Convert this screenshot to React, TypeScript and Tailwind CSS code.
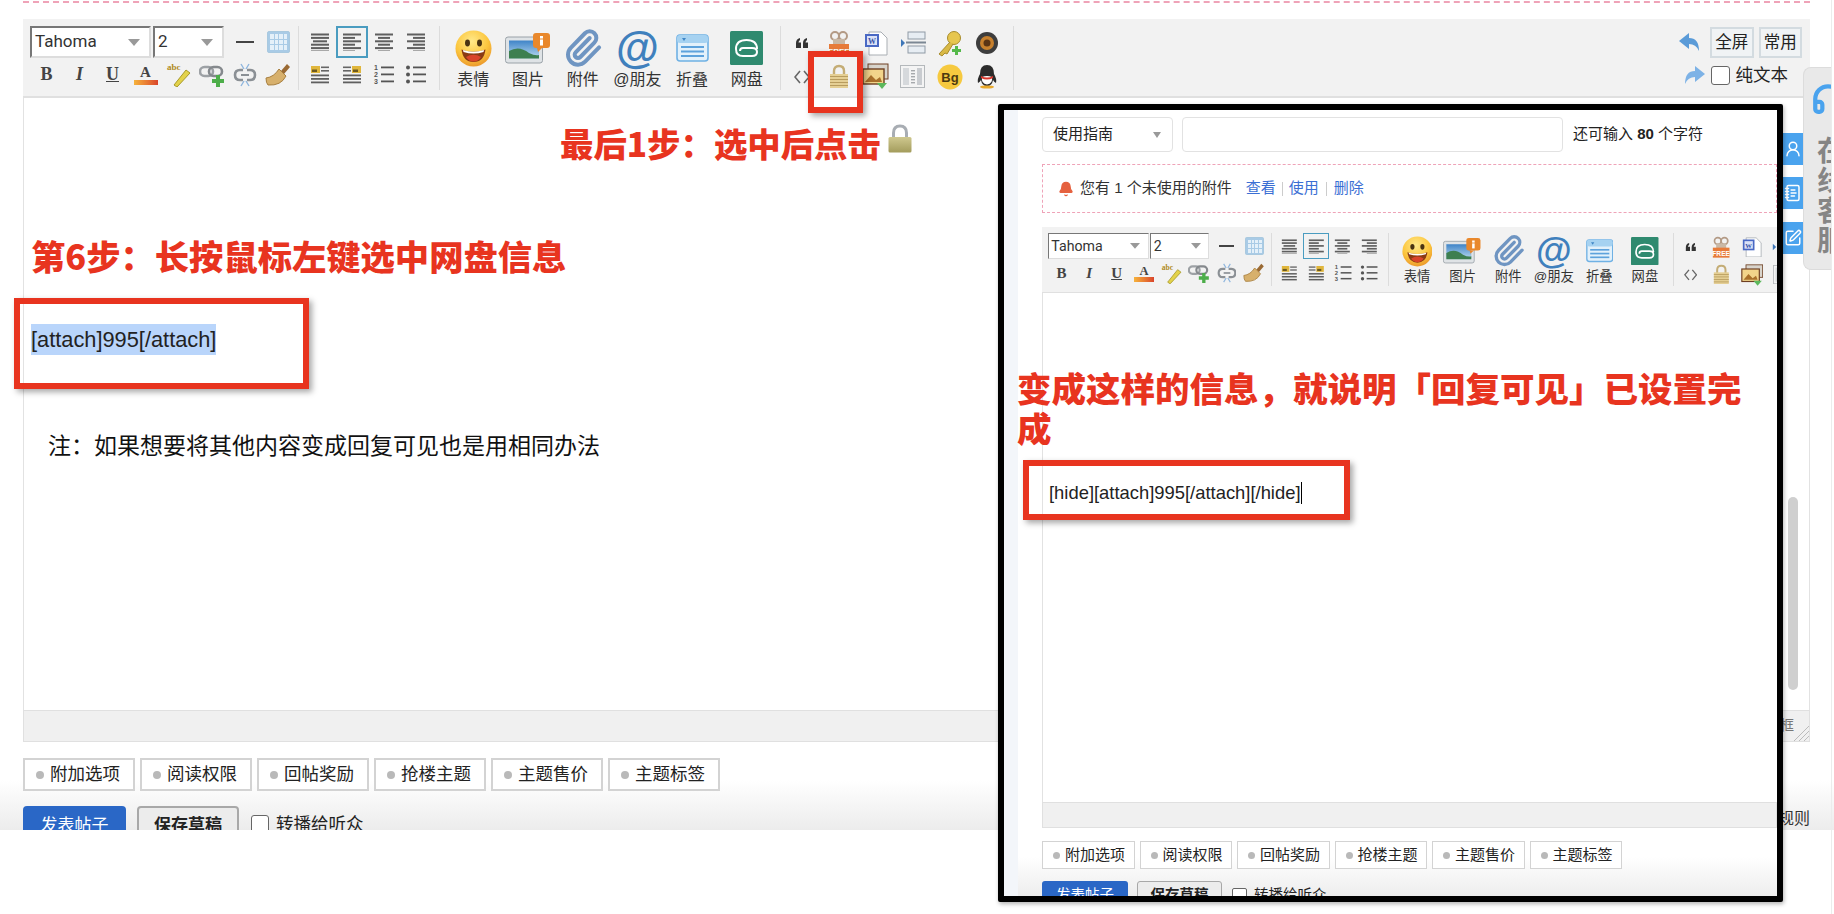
import { Bell, Headphones, Paperclip, SquarePen, UserRound, NotebookText } from "lucide-react"

const SANS = "font-['Liberation_Sans','Noto_Sans_CJK_SC',sans-serif]"
const ANNOTATION = "absolute font-['Noto_Sans_CJK_SC',sans-serif] font-black text-[#e8341f] leading-[40px]"
const RED_BOX = "absolute border-[6px] border-[#e8341f] shadow-[3px_3px_6px_rgba(0,0,0,0.35)]"

type Row = [number, number]

function Lines({ rows }: { rows: Row[] }) {
  return (
    <svg width="20" height="18" viewBox="0 0 20 18">
      {rows.map((r, i) => (
        <rect key={i} x={r[0]} y={i * 3.4 + 0.5} width={r[1]} height="2" fill="#5f5f5f" />
      ))}
    </svg>
  )
}

function FloatImg({ right }: { right?: boolean }) {
  return (
    <svg width="20" height="18" viewBox="0 0 20 18">
      <rect x={right ? 10 : 1} y="0" width="9" height="7" fill="#e0b63c" />
      <rect x={right ? 11 : 2} y="3.5" width="5" height="2.5" fill="#6d5a20" />
      <rect x={right ? 1 : 11} y="0.5" width="8" height="1.6" fill="#666" />
      <rect x={right ? 1 : 11} y="4" width="8" height="1.6" fill="#666" />
      <rect x="1" y="8.5" width="18" height="1.8" fill="#5f5f5f" />
      <rect x="1" y="12" width="18" height="1.8" fill="#5f5f5f" />
      <rect x="1" y="15.5" width="18" height="1.8" fill="#5f5f5f" />
    </svg>
  )
}

function ListIcon({ ordered }: { ordered?: boolean }) {
  return (
    <svg width="22" height="20" viewBox="0 0 22 20">
      {[2, 9, 16].map((y, i) =>
        ordered ? (
          <text key={y} x="1" y={y + 3} fontSize="7" fontWeight="700" fill="#555" fontFamily="Liberation Sans">
            {i + 1}
          </text>
        ) : (
          <circle key={y} cx="3" cy={y + 0.5} r="2" fill="#555" />
        ),
      )}
      {[2, 9, 16].map((y) => (
        <rect key={y} x="8" y={y - 0.5} width="13" height="1.8" fill="#555" />
      ))}
    </svg>
  )
}

function Smile() {
  return (
    <svg width="37" height="37" viewBox="0 0 37 37">
      <defs>
        <radialGradient id="sm" cx="45%" cy="30%" r="75%">
          <stop offset="0%" stopColor="#ffe98a" />
          <stop offset="60%" stopColor="#fcc63d" />
          <stop offset="100%" stopColor="#e8912a" />
        </radialGradient>
      </defs>
      <circle cx="18.5" cy="18.5" r="18" fill="url(#sm)" />
      <ellipse cx="12.5" cy="13" rx="2.5" ry="3.4" fill="#4a3312" />
      <ellipse cx="24.5" cy="13" rx="2.5" ry="3.4" fill="#4a3312" />
      <path d="M6.5 19.5 Q18.5 24 30.5 19.5 Q29 32 18.5 32 Q8 32 6.5 19.5Z" fill="#8a3a14" />
      <path d="M11 27 Q18.5 22.5 26 27 Q23 31.5 18.5 31.5 Q14 31.5 11 27Z" fill="#d9442a" />
      <path d="M8 20 Q18.5 23.5 29 20 L28.5 22 Q18.5 25 8.5 22Z" fill="#fff" />
    </svg>
  )
}

function PictureIcon() {
  return (
    <svg width="46" height="31" viewBox="0 0 46 31">
      <defs>
        <linearGradient id="sky" x1="0" y1="0" x2="0" y2="1">
          <stop offset="0%" stopColor="#3f84c8" />
          <stop offset="100%" stopColor="#bcdcf0" />
        </linearGradient>
      </defs>
      <rect x="0.5" y="4" width="37" height="26" rx="2.5" fill="#dfe3e6" stroke="#9aa2a8" />
      <rect x="4" y="7.5" width="30" height="18" fill="url(#sky)" />
      <path d="M4 18 Q14 12 24 20 Q30 23 34 22 V25.5 H4Z" fill="#3d7f50" />
      <rect x="28" y="0" width="17" height="15" rx="3" fill="#e9882c" />
      <path d="M32 15 L33 19 L37 15Z" fill="#e9882c" />
      <rect x="35" y="3" width="3" height="2.5" fill="#fff" />
      <rect x="35" y="6.5" width="3" height="6" fill="#fff" />
    </svg>
  )
}

function FoldIcon() {
  return (
    <svg width="33" height="28" viewBox="0 0 33 28">
      <rect x="1" y="1" width="31" height="26" rx="3" fill="#e3f1fb" stroke="#6fb1e4" strokeWidth="1.6" />
      <rect x="1" y="1" width="31" height="8" rx="3" fill="#a6d2f1" />
      <path d="M6 4 L10 4 L8 7Z" fill="#3f86c6" />
      <rect x="5" y="12" width="23" height="2" fill="#5da2dc" />
      <rect x="5" y="16.5" width="23" height="2" fill="#5da2dc" />
      <rect x="5" y="21" width="23" height="2" fill="#5da2dc" />
    </svg>
  )
}

function PanIcon() {
  return (
    <svg width="33" height="34" viewBox="0 0 33 34">
      <rect width="33" height="34" rx="1.5" fill="#2f8a6f" />
      <path
        d="M6 18 Q6 9 16.5 9 Q27 9 27 18 M6 18 Q6 25 13 25 H22 Q27 25 27 21 Q27 17 22 17 H13 Q10 17 10 20"
        fill="none"
        stroke="#fff"
        strokeWidth="2"
      />
    </svg>
  )
}

function LockTan() {
  return (
    <svg width="20" height="25" viewBox="0 0 20 25">
      <path d="M5 11 V7 Q5 2 10 2 Q15 2 15 7 V11" fill="none" stroke="#c4ad76" strokeWidth="2.4" />
      <rect x="1" y="10" width="18" height="14" fill="#e5cf94" />
      {[12, 15, 18, 21].map((y) => (
        <rect key={y} x="1" y={y} width="18" height="1" fill="#b89c5e" />
      ))}
    </svg>
  )
}

function LockEmoji() {
  return (
    <svg width="24" height="29" viewBox="0 0 24 29">
      <defs>
        <linearGradient id="kh" x1="0" y1="0" x2="0" y2="1">
          <stop offset="0%" stopColor="#cfc88f" />
          <stop offset="100%" stopColor="#a39c5c" />
        </linearGradient>
      </defs>
      <path d="M5.5 14 V9 Q5.5 2 12 2 Q18.5 2 18.5 9 V14" fill="none" stroke="#a8adb3" strokeWidth="3" />
      <rect x="0.5" y="13" width="23" height="15.5" rx="1.5" fill="url(#kh)" />
    </svg>
  )
}

function SmallIcons({ name }: { name: string }) {
  switch (name) {
    case "quote":
      return (
        <svg width="14" height="10" viewBox="0 0 14 10">
          <path d="M1 10 V5 Q1 1 5 0 V2 Q3.5 3 3.5 4.5 H6 V10Z M8 10 V5 Q8 1 12 0 V2 Q10.5 3 10.5 4.5 H13 V10Z" fill="#333" />
        </svg>
      )
    case "free":
      return (
        <svg width="22" height="27" viewBox="0 0 22 27">
          <circle cx="7" cy="6" r="4" fill="none" stroke="#b39a85" strokeWidth="2" />
          <circle cx="15" cy="6" r="4" fill="none" stroke="#b39a85" strokeWidth="2" />
          <rect x="5" y="9" width="12" height="6" fill="#c9b8a6" />
          <rect x="1" y="14" width="20" height="12" fill="#e77b3a" />
          <text x="11" y="24" fontSize="8" fontWeight="700" textAnchor="middle" fill="#fff" fontFamily="Liberation Sans">FREE</text>
        </svg>
      )
    case "doc":
      return (
        <svg width="24" height="25" viewBox="0 0 24 25">
          <path d="M5 1 H17 L23 7 V24 H5Z" fill="#fff" stroke="#a9aeb3" />
          <rect x="1" y="3" width="14" height="13" fill="#4a69c4" />
          <rect x="3" y="5" width="10" height="9" fill="#dbe2f7" />
          <text x="8" y="13" fontSize="8" fontWeight="700" textAnchor="middle" fill="#3a55a8" fontFamily="Liberation Serif">W</text>
        </svg>
      )
    case "pagebreak":
      return (
        <svg width="26" height="24" viewBox="0 0 26 24">
          <path d="M1 8 L5 12 L1 16Z" fill="#3f77b8" />
          <rect x="8" y="1" width="17" height="7" fill="#e7edf3" stroke="#8f9aa5" />
          <rect x="6" y="10.5" width="20" height="2" fill="#7b8794" />
          <rect x="8" y="15" width="17" height="7" fill="#e7edf3" stroke="#8f9aa5" />
        </svg>
      )
    case "key":
      return (
        <svg width="26" height="27" viewBox="0 0 26 27">
          <circle cx="17" cy="8" r="6.5" fill="#e6c64f" stroke="#a88c2c" />
          <path d="M13 12 L2 24 L5 26 L8 23 L10 24 L16 14" fill="#d9b946" stroke="#a88c2c" />
          <path d="M18 16 h3 v3 h3 v3 h-3 v3 h-3 v-3 h-3 v-3 h3z" fill="#55b94a" />
        </svg>
      )
    case "disc":
      return (
        <svg width="24" height="24" viewBox="0 0 24 24">
          <circle cx="12" cy="12" r="11" fill="#3d3d3d" />
          <circle cx="12" cy="12" r="7" fill="#c7802d" />
          <circle cx="12" cy="12" r="3.5" fill="#5a3414" />
        </svg>
      )
    case "code":
      return (
        <svg width="16" height="14" viewBox="0 0 16 14">
          <path d="M6 1 L1 7 L6 13 M10 1 L15 7 L10 13" fill="none" stroke="#666" strokeWidth="1.6" />
        </svg>
      )
    case "imgdown":
      return (
        <svg width="27" height="27" viewBox="0 0 27 27">
          <rect x="6" y="1" width="20" height="15" fill="#d8d4cc" stroke="#6e3f22" />
          <rect x="1" y="6" width="21" height="15" fill="#f2d48a" stroke="#6e3f22" strokeWidth="1.4" />
          <path d="M3 19 L9 12 L14 17 L18 14 L20 19Z" fill="#a9702a" />
          <path d="M15 20 H25 L20 26Z" fill="#5cb85c" />
        </svg>
      )
    case "columns":
      return (
        <svg width="25" height="23" viewBox="0 0 25 23">
          <rect x="0.5" y="0.5" width="24" height="22" fill="#f4f4f4" stroke="#b4b8bb" />
          <rect x="3" y="3" width="6" height="17" fill="#d6d9dc" />
          {[5, 8, 11, 14, 17].map((y) => (
            <rect key={y} x="11" y={y} width="4" height="1.4" fill="#a6a9ac" />
          ))}
          <rect x="17" y="3" width="5" height="17" fill="#c9ccd0" />
        </svg>
      )
    case "bg":
      return (
        <svg width="26" height="26" viewBox="0 0 26 26">
          <circle cx="13" cy="13" r="12.5" fill="#f6c93f" />
          <text x="13" y="18" fontSize="13" fontWeight="700" textAnchor="middle" fill="#4c3a10" fontFamily="Liberation Sans">Bg</text>
        </svg>
      )
    case "qq":
      return (
        <svg width="22" height="25" viewBox="0 0 22 25">
          <path d="M11 1 Q18 1 18 10 Q21 15 20 19 Q18 18 17 16 Q16 22 11 22 Q6 22 5 16 Q4 18 2 19 Q1 15 4 10 Q4 1 11 1Z" fill="#2b2b2b" />
          <path d="M6 13 Q11 11 16 13 Q17 20 11 20.5 Q5 20 6 13Z" fill="#fff" />
          <path d="M5 12 Q11 15 17 12 L17 14 Q11 17 5 14Z" fill="#d9352b" />
          <ellipse cx="11" cy="23" rx="7" ry="1.6" fill="#e8a92c" />
        </svg>
      )
    default:
      return <LockTan />
  }
}

function Arrow() {
  return (
    <svg width="12" height="7" viewBox="0 0 12 7">
      <path d="M0 0 H12 L6 7Z" fill="#999" />
    </svg>
  )
}

function FontSelect({ label, width }: { label: string; width: string }) {
  return (
    <div className={`flex h-[32px] items-center justify-between border-2 border-b-[#ddd] border-l-[#777] border-r-[#ddd] border-t-[#777] bg-white pl-[3px] pr-[9px] font-['Roboto',sans-serif] text-[17px] text-[#333] ${width}`}>
      <span>{label}</span>
      <Arrow />
    </div>
  )
}

function Toolbar({ className }: { className?: string }) {
  const alignRows: Row[][] = [
    [[1, 18], [1, 18], [3, 14], [1, 18], [1, 18], [1, 18]],
    [[1, 18], [1, 12], [1, 18], [1, 12], [1, 18], [1, 12]],
    [[1, 18], [4, 12], [1, 18], [4, 12], [1, 18], [4, 12]],
    [[1, 18], [7, 12], [1, 18], [7, 12], [1, 18], [7, 12]],
  ]
  return (
    <div className={`flex h-[79px] w-[1787px] shrink-0 items-start border-b-2 border-[#e0e0e0] bg-[#f2f2f2] pl-[7px] pt-[7px] ${className ?? ""}`}>
      <div className="w-[264px] shrink-0">
        <div className="flex h-[32px] items-center gap-[2px]">
          <FontSelect label="Tahoma" width="w-[121px]" />
          <FontSelect label="2" width="w-[71px]" />
          <div className="ml-[10px] h-[2.5px] w-[18px] bg-[#444]" />
          <div className="ml-[11px] grid h-[22px] w-[23px] grid-cols-4 gap-px rounded-[2px] border border-[#a9c9df] bg-[#a9cbe6] p-[2px]">
            {Array.from({ length: 12 }).map((_, i) => (
              <span key={i} className="bg-[#e4f0f9]" />
            ))}
          </div>
        </div>
        <div className="grid h-[33px] grid-cols-8">
          <span className="flex items-center justify-center font-['Liberation_Serif',serif] text-[18px] font-bold text-[#444]">B</span>
          <span className="flex items-center justify-center font-['Liberation_Serif',serif] text-[18px] font-bold italic text-[#444]">I</span>
          <span className="flex items-center justify-center font-['Liberation_Serif',serif] text-[18px] font-bold text-[#444] underline">U</span>
          <span className="flex flex-col items-center justify-center">
            <span className="font-['Liberation_Serif',serif] text-[15px] font-bold leading-[15px] text-[#444]">A</span>
            <span className="h-[5px] w-[24px] bg-gradient-to-r from-[#f5b23c] to-[#d9432b]" />
          </span>
          <span className="flex items-center justify-center">
            <svg width="25" height="25" viewBox="0 0 25 25">
              <text x="1" y="8" fontSize="9" fontWeight="700" fill="#b08a1c" fontFamily="Liberation Serif">abc</text>
              <path d="M8 23 L20 8 L24 11 L11 25Z" fill="#e3d24a" stroke="#a89a2a" />
            </svg>
          </span>
          <span className="flex items-center justify-center">
            <svg width="26" height="24" viewBox="0 0 26 24">
              <rect x="1" y="4" width="13" height="9" rx="4.5" fill="none" stroke="#9da1a5" strokeWidth="2.6" />
              <rect x="10" y="4" width="13" height="9" rx="4.5" fill="none" stroke="#85898d" strokeWidth="2.6" />
              <path d="M17 12 h4 v4 h4 v4 h-4 v4 h-4 v-4 h-4 v-4 h4z" fill="#4dae4a" />
            </svg>
          </span>
          <span className="flex items-center justify-center">
            <svg width="24" height="24" viewBox="0 0 24 24">
              <path d="M10 7 H7 Q2 7 2 12 Q2 17 7 17 H10 M14 7 H17 Q22 7 22 12 Q22 17 17 17 H14" fill="none" stroke="#8b9095" strokeWidth="2.6" />
              <path d="M8 12 H16" stroke="#8b9095" strokeWidth="2" />
              <path d="M8 1 L11 6 M16 1 L13 6 M8 23 L11 18 M16 23 L13 18" stroke="#8fb6de" strokeWidth="1.4" />
            </svg>
          </span>
          <span className="flex items-center justify-center">
            <svg width="26" height="24" viewBox="0 0 26 24">
              <path d="M16 8 L22 1 L25 4 L19 11Z" fill="#9a6a34" />
              <path d="M14 6 L21 13 Q16 23 3 22 Q1 20 1 15 Q9 14 14 6Z" fill="#d7b06c" stroke="#a87f3f" />
            </svg>
          </span>
        </div>
      </div>
      <div className="ml-[4px] h-[64px] w-px shrink-0 bg-[#dcdcdc]" />
      <div className="ml-[5px] grid w-[128px] shrink-0 grid-cols-4 grid-rows-[32px_33px]">
        {alignRows.map((rows, i) => (
          <div key={i} className={`flex items-center justify-center ${i === 1 ? "border-2 border-[#4a9cc0]" : ""}`}>
            <Lines rows={rows} />
          </div>
        ))}
        <div className="flex items-center justify-center"><FloatImg /></div>
        <div className="flex items-center justify-center"><FloatImg right /></div>
        <div className="flex items-center justify-center"><ListIcon ordered /></div>
        <div className="flex items-center justify-center"><ListIcon /></div>
      </div>
      <div className="ml-[7px] h-[64px] w-px shrink-0 bg-[#dcdcdc]" />
      <div className="ml-[6px] flex shrink-0">
        {[
          { label: "表情", icon: <Smile /> },
          { label: "图片", icon: <PictureIcon /> },
          { label: "附件", icon: <Paperclip size={40} strokeWidth={2.4} className="text-[#6f95c2]" /> },
          { label: "@朋友", icon: <span className="font-['Liberation_Sans',sans-serif] text-[44px] font-bold leading-[44px] text-[#3f80bd]">@</span> },
          { label: "折叠", icon: <FoldIcon /> },
          { label: "网盘", icon: <PanIcon /> },
        ].map((b) => (
          <div key={b.label} className="flex w-[54.7px] flex-col items-center">
            <div className="flex h-[44px] items-center justify-center">{b.icon}</div>
            <span className="h-[20px] whitespace-nowrap text-[16px] leading-[20px] text-[#333]">{b.label}</span>
          </div>
        ))}
      </div>
      <div className="ml-[6px] h-[64px] w-px shrink-0 bg-[#dcdcdc]" />
      <div className="ml-[2px] grid w-[222px] shrink-0 grid-cols-6 grid-rows-[34px_33px]">
        {["quote", "free", "doc", "pagebreak", "key", "disc", "code", "lock", "imgdown", "columns", "bg", "qq"].map((n) => (
          <div key={n} className="flex items-center justify-center">
            <SmallIcons name={n} />
          </div>
        ))}
      </div>
      <div className="ml-[8px] h-[64px] w-px shrink-0 bg-[#dcdcdc]" />
      <div className="ml-auto flex flex-col pr-[8px]">
        <div className="flex h-[32px] items-center justify-end gap-[5px]">
          <svg className="mr-[4px]" width="24" height="22" viewBox="0 0 24 22">
            <path d="M12 2 L2 10 L12 18 V13 Q19 13 22 20 Q22 7 12 7Z" fill="#5a9bd8" />
          </svg>
          {["全屏", "常用"].map((b) => (
            <span key={b} className="flex h-[31px] w-[43.5px] items-center justify-center border-2 border-[#d3dbe0] bg-[#f0f3f5] text-[16.5px] text-[#222]">
              {b}
            </span>
          ))}
        </div>
        <div className="mt-[2px] flex h-[30px] items-center justify-end">
          <svg className="mr-[4px]" width="24" height="22" viewBox="0 0 24 22">
            <path d="M12 2 L22 10 L12 18 V13 Q5 13 2 20 Q2 7 12 7Z" fill="#7db2e6" />
          </svg>
          <span className="h-[19px] w-[19px] rounded-[3px] border border-[#666] bg-white" />
          <span className="ml-[6px] mr-[14px] text-[17.5px] text-[#222]">纯文本</span>
        </div>
      </div>
    </div>
  )
}

const TABS = ["附加选项", "阅读权限", "回帖奖励", "抢楼主题", "主题售价", "主题标签"]

function TabRow({ small }: { small?: boolean }) {
  return (
    <div className="flex gap-[5px]">
      {TABS.map((t) => (
        <div
          key={t}
          className={
            small
              ? "flex h-[28px] w-[92.5px] items-center gap-[5px] border border-[#d3d3d3] bg-white pl-[10px] text-[15px] text-[#222]"
              : "flex h-[33px] w-[112px] items-center gap-[6px] border-2 border-[#d3d3d3] bg-white pl-[11px] text-[17.5px] text-[#222]"
          }
        >
          <span className={`rounded-full bg-[#b9b9b9] ${small ? "h-[7px] w-[7px]" : "h-[8px] w-[8px]"}`} />
          {t}
        </div>
      ))}
    </div>
  )
}

export default function App() {
  return (
    <div className={`relative h-[914px] w-[1834px] overflow-hidden bg-white ${SANS}`}>
      <div className="h-[830px] overflow-hidden bg-gradient-to-b from-white from-[94%] to-[#ececec]">
        <div className="ml-[23px] h-[3px] w-[1787px] border-b-2 border-dashed border-[#efa3b8]" />
        <div className="ml-[23px] mt-[16px] w-[1787px]">
          <Toolbar />
          <div className="h-[612px] border-x border-[#e2e2e2] bg-white" />
          <div className="relative h-[32px] border border-[#e0e0e0] bg-[#f0f0f0]">
            <span className="absolute right-[15px] top-[4px] text-[14px] text-[#777]">框</span>
            <svg className="absolute bottom-0 right-0" width="16" height="16" viewBox="0 0 16 16">
              <path d="M1 16 L16 1 M6 16 L16 6 M11 16 L16 11" stroke="#bbb" strokeWidth="1" />
            </svg>
          </div>
        </div>
        <div className="ml-[23px] mt-[16px]">
          <TabRow />
        </div>
        <div className="ml-[23px] mt-[15px] flex items-start">
          <span className="flex h-[40px] w-[103px] items-center justify-center rounded-[4px] bg-[#2a67c6] text-[17px] text-white">发表帖子</span>
          <span className="ml-[11px] flex h-[40px] w-[102px] items-center justify-center rounded-[4px] border-2 border-[#a8a8a8] bg-[#ececec] text-[17px] font-bold text-[#222]">保存草稿</span>
          <span className="ml-[12px] mt-[9px] h-[20px] w-[18px] rounded-[3px] border border-[#666] bg-white" />
          <span className="ml-[7px] mt-[6px] text-[17.5px] leading-[24px] text-[#222]">转播给听众</span>
          <span className="ml-auto mr-[24px] mt-[1px] text-[16px] leading-[24px] text-[#333]">规则</span>
        </div>
      </div>

      <div className="absolute left-[1782px] top-[133px] flex h-[32px] w-[21px] items-center justify-center bg-[#4aa3ee]">
        <UserRound size={18} className="text-white" />
      </div>
      <div className="absolute left-[1782px] top-[177px] flex h-[32px] w-[21px] items-center justify-center bg-[#4aa3ee]">
        <NotebookText size={18} className="text-white" />
      </div>
      <div className="absolute left-[1782px] top-[222px] flex h-[32px] w-[21px] items-center justify-center bg-[#4aa3ee]">
        <SquarePen size={18} className="text-white" />
      </div>
      <div className="absolute left-[1788px] top-[497px] h-[193px] w-[10px] rounded-full bg-[#cfcfcf]" />

      <div className="absolute left-[1803px] top-[67px] h-[203px] w-[28px] overflow-hidden rounded-l-[8px] border border-r-0 border-[#dcdcdc] bg-[#e9e9e9]">
        <Headphones size={34} strokeWidth={3} className="ml-[7px] mt-[14px] text-[#4aa3ee]" />
        <div className="ml-[13px] mt-[21px] w-[30px] text-[28px] font-bold leading-[30px] text-[#858585]">在线客服</div>
      </div>
      <div className="absolute left-[1831px] top-0 h-[914px] w-px bg-[#ececec]" />

      {/* nested screenshot pasted over the editor */}
      <div className="absolute left-[998px] top-[104px] flex h-[798px] w-[785px] overflow-hidden rounded-[2px] border-[6px] border-black bg-white shadow-[1px_2px_4px_rgba(0,0,0,0.3)]">
        <div className="w-[14px] shrink-0 bg-[#f3f6fa]" />
        <div className="flex min-w-0 flex-1 flex-col bg-gradient-to-b from-white from-[95%] to-[#ededed] pl-[24px]">
          <div className="mt-[7px] flex h-[35px] shrink-0 items-center">
            <div className="flex h-[35px] w-[131px] items-center justify-between rounded-[4px] border border-[#e2e2e2] pl-[10px] pr-[11px] text-[15px] text-[#222]">
              使用指南
              <svg width="8" height="6" viewBox="0 0 8 6"><path d="M0 0 H8 L4 6Z" fill="#999" /></svg>
            </div>
            <div className="ml-[9px] h-[35px] w-[381px] rounded-[4px] border border-[#e2e2e2]" />
            <span className="ml-[10px] whitespace-nowrap text-[15px] text-[#222]">
              还可输入 <b>80</b> 个字符
            </span>
          </div>
          <div className="mt-[12px] flex h-[49px] shrink-0 items-center border border-dashed border-[#efa3b8] pl-[15px] text-[15px] text-[#333]">
            <Bell size={16} fill="#e5613f" className="text-[#e5613f]" />
            <span className="ml-[6px] whitespace-nowrap">您有 1 个未使用的附件</span>
            <span className="ml-[14px] text-[#3b6fd4]">查看</span>
            <span className="mx-[6px] h-[14px] w-px bg-[#ccc]" />
            <span className="text-[#3b6fd4]">使用</span>
            <span className="mx-[7px] h-[14px] w-px bg-[#ccc]" />
            <span className="text-[#3b6fd4]">删除</span>
          </div>
          <div className="mt-[14px] h-[66px] shrink-0 overflow-hidden">
            <Toolbar className="[zoom:0.833]" />
          </div>
          <div className="h-[509px] shrink-0 border-l border-[#e2e2e2]" />
          <div className="h-[26px] shrink-0 border border-[#e0e0e0] bg-[#f0f0f0]" />
          <div className="mt-[13px] shrink-0">
            <TabRow small />
          </div>
          <div className="mt-[12px] flex h-[15px] shrink-0 items-start overflow-hidden">
            <span className="flex h-[30px] w-[86px] shrink-0 items-center justify-center rounded-[3px] bg-[#2a67c6] text-[14.5px] text-white">发表帖子</span>
            <span className="ml-[9px] flex h-[30px] w-[85px] shrink-0 items-center justify-center rounded-[3px] border border-[#a8a8a8] bg-[#ececec] text-[14.5px] font-bold text-[#222]">保存草稿</span>
            <span className="ml-[10px] mt-[7px] h-[15px] w-[15px] shrink-0 rounded-[2px] border border-[#666] bg-white" />
            <span className="ml-[7px] mt-[4px] whitespace-nowrap text-[14.5px] leading-[20px] text-[#222]">转播给听众</span>
          </div>
        </div>
      </div>

      {/* annotations */}
      <div className={`${ANNOTATION} left-[560px] top-[123px] whitespace-nowrap text-[33.4px]`}>最后1步：选中后点击</div>
      <div className="absolute left-[888px] top-[124px]"><LockEmoji /></div>
      <div className={`${RED_BOX} left-[808px] top-[51px] h-[62px] w-[55px]`} />

      <div className={`${ANNOTATION} left-[31px] top-[235px] whitespace-nowrap text-[34.3px]`}>第6步：长按鼠标左键选中网盘信息</div>
      <div className={`${RED_BOX} left-[14px] top-[298px] h-[91px] w-[295px]`} />
      <div className="absolute left-[31px] top-[324px] bg-[#b9d5fb] text-[21.8px] leading-[31px] text-[#222]">[attach]995[/attach]</div>
      <div className="absolute left-[48px] top-[429px] whitespace-nowrap font-['Noto_Sans_CJK_SC',sans-serif] text-[23px] leading-[30px] text-[#111]">注：如果想要将其他内容变成回复可见也是用相同办法</div>

      <div className={`${ANNOTATION} left-[1017px] top-[367px] w-[735px] text-[34.5px]`}>变成这样的信息，就说明「回复可见」已设置完成</div>
      <div className={`${RED_BOX} left-[1023px] top-[460px] h-[60px] w-[327px]`} />
      <div className="absolute left-[1049px] top-[482px] border-r border-black text-[18.4px] leading-[22px] text-[#222]">[hide][attach]995[/attach][/hide]</div>
    </div>
  )
}
